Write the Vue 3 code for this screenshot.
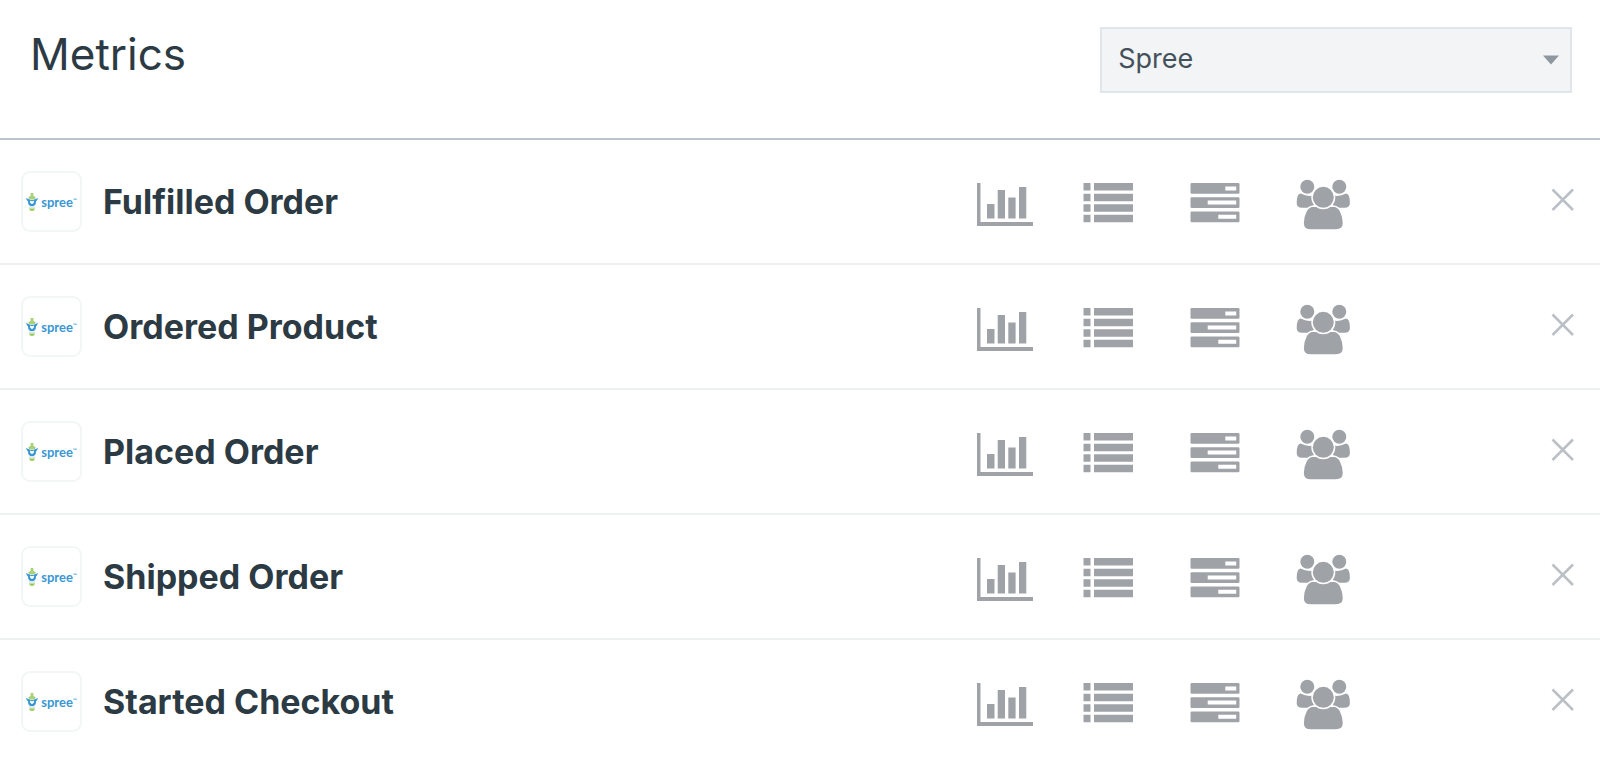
<script setup>
    import { ref } from 'vue'
    const integrations = ['Spree']
    const selected = ref('Spree')
    const metrics = ref([
        'Fulfilled Order',
        'Ordered Product',
        'Placed Order',
        'Shipped Order',
        'Started Checkout'
    ])
    // remove a metric from the list
    function removeMetric(index) {
        metrics.value.splice(index, 1)
    }
</script>

<template>
    <main class="metrics">
        <header class="metrics_header">
            <h1 class="title">Metrics</h1>
            <div class="filter">
                <select v-model="selected" class="filter_select" aria-label="Integration">
                    <option v-for="item in integrations" :key="item">{{item}}</option>
                </select>
                <svg class="filter_arrow" viewBox="0 0 18 10" aria-hidden="true">
                    <path d="M1 0.5H17L9 9.5Z" />
                </svg>
            </div>
        </header>
        <ul class="list">
            <li class="row" v-for="(metric,index) in metrics" :key="metric">
                <span class="logo">
                    <svg class="logo_mark" viewBox="0 0 12 20" aria-hidden="true">
                        <path fill="#a9d07a" d="M4.6 1H7.4V3.8L9.8 5.4L8.6 7.6H3.4L2.2 5.4L4.6 3.8Z" />
                        <path fill="#3a97d3" d="M0 6L3 7.2Q6 9 9 7.2L12 6Q11.4 8.6 10 9.4Q10 14 6 14.2Q2 14 2 9.4Q0.6 8.6 0 6Z" />
                        <path fill="#fff" d="M4 8.6Q6 10 8 8.6Q8.4 11.6 6 12Q3.6 11.6 4 8.6Z" />
                        <path fill="#d8e9ef" d="M2.6 13.4Q6 15.8 9.4 13.4L8.8 16.6H3.2Z" />
                        <path fill="#9ccb5c" d="M3 16.4H9Q8.6 19 6 19Q3.4 19 3 16.4Z" />
                    </svg>
                    <span class="logo_text">spree<sup class="logo_tm">™</sup></span>
                </span>
                <h2 class="name">{{metric}}</h2>
                <div class="actions">
                    <button class="action" type="button" aria-label="Chart">
                        <svg class="icon" viewBox="0 0 60 57" aria-hidden="true">
                            <path d="M1 10H4.5V49H57V53H1ZM11 31H18.5V45.5H11ZM21.7 17H29V45.5H21.7ZM32.3 24.5H39.6V45.5H32.3ZM43 14H50.3V45.5H43Z" />
                        </svg>
                    </button>
                    <button class="action" type="button" aria-label="Activity">
                        <svg class="icon" viewBox="0 0 60 57" aria-hidden="true">
                            <path d="M0.5 10H7.5V17.5H0.5ZM11 10H50V17.5H11ZM0.5 20.7H7.5V28.2H0.5ZM11 20.7H50V28.2H11ZM0.5 31.3H7.5V38.8H0.5ZM11 31.3H50V38.8H11ZM0.5 41.7H7.5V49.2H0.5ZM11 41.7H50V49.2H11Z" />
                        </svg>
                    </button>
                    <button class="action" type="button" aria-label="Cohorts">
                        <svg class="icon" viewBox="0 0 60 57" aria-hidden="true">
                            <rect x="0.5" y="10" width="49" height="10.7" rx="1.2" />
                            <rect x="0.5" y="24.2" width="49" height="10.7" rx="1.2" />
                            <rect x="0.5" y="38.5" width="49" height="10.7" rx="1.2" />
                            <path fill="#fff" d="M35.3 13.4H46.2V17.4H35.3ZM17.7 27.6H46.2V31.6H17.7ZM28.3 41.8H46.2V45.8H28.3Z" />
                        </svg>
                    </button>
                    <button class="action" type="button" aria-label="People">
                        <svg class="icon" viewBox="0 0 60 57" aria-hidden="true">
                            <circle cx="10.3" cy="13.7" r="7" />
                            <circle cx="42.3" cy="13.7" r="7" />
                            <path d="M3.6 20.6Q10.3 24 16 22.5L17 32L12 34.8H5Q-0.3 34.8 -0.3 30Q-0.3 21 3.6 20.6Z" />
                            <path d="M49 20.6Q42.3 24 36.6 22.5L35.6 32L40.6 34.8H47.6Q52.9 34.8 52.9 30Q52.9 21 49 20.6Z" />
                            <path stroke="#fff" stroke-width="1.5" d="M15.5 33.2H37.1Q41 33.4 43.5 38Q46.5 44 46.5 50Q46.5 57 39 57H13.6Q6.1 57 6.1 50Q6.1 44 9.1 38Q11.6 33.4 15.5 33.2Z" />
                            <circle cx="26.3" cy="24.3" r="12" fill="#fff" />
                            <circle cx="26.3" cy="24.3" r="10.5" />
                        </svg>
                    </button>
                </div>
                <button class="remove" type="button" :aria-label="'Remove ' + metric" @click="removeMetric(index)">
                    <svg class="remove_icon" viewBox="0 0 24 24" aria-hidden="true">
                        <path stroke-width="2.5" d="M1.5 1.5L22 22M22 1.5L1.5 22" />
                    </svg>
                </button>
            </li>
        </ul>
    </main>
</template>

<style>
    body {
        margin: 0;
        background: #fff;
    }
</style>

<style scoped>
    .metrics {
        color: #2c3a44;
        font-family: Inter, "Open Sans", sans-serif;

        /* header */
        .metrics_header {
            display: flex;
            justify-content: space-between;
            align-items: flex-start;
            padding: 27px 28px 45px 30px;
            border-bottom: 2px solid #bac4ce;
        }

        .title {
            margin: 0;
            font-size: 44px;
            font-weight: 400;
            line-height: 54px;
        }

        .filter {
            position: relative;
            width: 30.6%;
            min-width: 200px;
        }

        .filter_select {
            appearance: none;
            display: block;
            width: 100%;
            height: 66px;
            padding: 0 48px 4px 16px;
            border: 2px solid #dfe5e8;
            border-radius: 0;
            background: #f2f4f6;
            color: #44515b;
            font-family: inherit;
            font-size: 27px;
        }

        .filter_arrow {
            position: absolute;
            top: 28px;
            right: 12px;
            width: 18px;
            height: 10px;
            fill: #8e979f;
            pointer-events: none;
        }

        /* list */
        .list {
            margin: 0;
            padding: 0;
            list-style: none;
        }

        .row {
            display: flex;
            align-items: center;
            padding: 31px 25px 31px 21px;
            border-bottom: 2px solid #edf1f2;
        }

        .row:last-child {
            padding-bottom: 28px;
            border-bottom: 0;
        }

        .logo {
            box-sizing: border-box;
            display: flex;
            align-items: center;
            justify-content: center;
            gap: 3px;
            width: 61px;
            height: 61px;
            border: 2px solid #f3f6f6;
            border-radius: 9px;
        }

        .logo_mark {
            width: 12px;
            height: 20px;
        }

        .logo_text {
            color: #3a97d3;
            font-family: Lato, sans-serif;
            font-size: 13px;
            font-weight: 700;
            line-height: 16px;
        }

        .logo_tm {
            font-size: 5px;
            line-height: 0;
        }

        .name {
            flex: 1;
            margin: 0 21px;
            font-size: 34px;
            font-weight: 700;
            line-height: 44px;
        }

        .actions {
            display: flex;
            gap: 47px;
        }

        .action,
        .remove {
            padding: 0;
            border: 0;
            background: none;
            cursor: pointer;
        }

        .icon {
            display: block;
            overflow: visible;
            width: 60px;
            height: 57px;
            fill: #9fa3a8;
        }

        .remove {
            margin-left: 12.5%;
            padding-bottom: 4px;
        }

        .remove_icon {
            display: block;
            width: 24px;
            height: 24px;
            fill: none;
            stroke: #bbc0c6;
        }
    }
</style>
